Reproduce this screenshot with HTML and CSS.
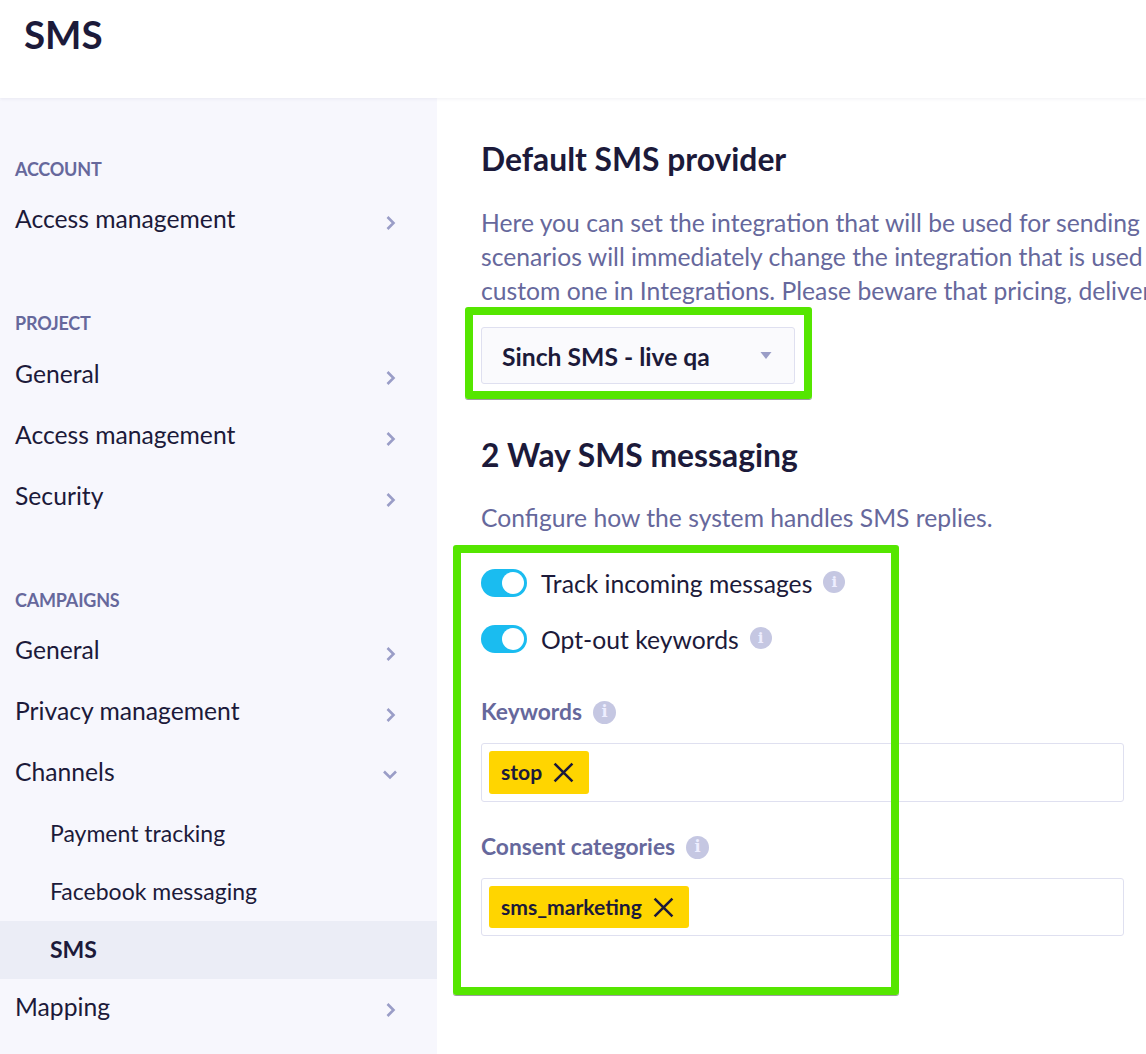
FILE: index.html
```html
<!DOCTYPE html>
<html lang="en">
<head>
<meta charset="utf-8">
<title>SMS</title>
<link rel="stylesheet" href="styles.css">
</head>
<body>
<header class="topbar"><h1 class="page-title">SMS</h1></header>
<div class="layout">
  <nav class="sidebar">
    <section class="nav-group">
      <h2 class="nav-label">ACCOUNT</h2>
      <a class="nav-item">Access management<svg class="chev" viewBox="0 0 12 16"><path d="M2.5 2l6 6-6 6"/></svg></a>
    </section>
    <section class="nav-group">
      <h2 class="nav-label roomy">PROJECT</h2>
      <a class="nav-item">General<svg class="chev" viewBox="0 0 12 16"><path d="M2.5 2l6 6-6 6"/></svg></a>
      <a class="nav-item">Access management<svg class="chev" viewBox="0 0 12 16"><path d="M2.5 2l6 6-6 6"/></svg></a>
      <a class="nav-item">Security<svg class="chev" viewBox="0 0 12 16"><path d="M2.5 2l6 6-6 6"/></svg></a>
    </section>
    <section class="nav-group">
      <h2 class="nav-label">CAMPAIGNS</h2>
      <a class="nav-item">General<svg class="chev" viewBox="0 0 12 16"><path d="M2.5 2l6 6-6 6"/></svg></a>
      <a class="nav-item">Privacy management<svg class="chev" viewBox="0 0 12 16"><path d="M2.5 2l6 6-6 6"/></svg></a>
      <a class="nav-item">Channels<svg class="chev-down" viewBox="0 0 16 12"><path d="M2 2.5l6 6 6-6"/></svg></a>
      <div class="nav-subs">
        <a class="nav-sub">Payment tracking</a>
        <a class="nav-sub">Facebook messaging</a>
        <a class="nav-sub active">SMS</a>
      </div>
      <a class="nav-item last">Mapping<svg class="chev" viewBox="0 0 12 16"><path d="M2.5 2l6 6-6 6"/></svg></a>
    </section>
  </nav>
  <main class="content">
    <h2 class="heading">Default SMS provider</h2>
    <p class="desc">Here you can set the integration that will be used for sending SMS messages in your campaigns.<br>scenarios will immediately change the integration that is used for sending, unless you set a<br>custom one in Integrations. Please beware that pricing, deliverability and features may differ.</p>
    <div class="select"><span>Sinch SMS - live qa</span><svg class="caret" viewBox="0 0 14 9"><path d="M1.500 1h11L7 8z" stroke-linejoin="round"/></svg></div>
    <h2 class="heading second">2 Way SMS messaging</h2>
    <p class="desc single">Configure how the system handles SMS replies.</p>
    <div class="toggle-row"><span class="toggle"><span class="knob"></span></span><span class="toggle-text">Track incoming messages</span><span class="info small">i</span></div>
    <div class="toggle-row"><span class="toggle"><span class="knob"></span></span><span class="toggle-text">Opt-out keywords</span><span class="info small">i</span></div>
    <div class="field-label first"><span class="field-text">Keywords</span><span class="info">i</span></div>
    <div class="tags tall"><span class="tag">stop<svg class="x" viewBox="0 0 20 20"><path d="M1.500 1.500l17 17M18.500 1.500l-17 17"/></svg></span></div>
    <div class="field-label"><span class="field-text">Consent categories</span><span class="info">i</span></div>
    <div class="tags"><span class="tag">sms_marketing<svg class="x" viewBox="0 0 20 20"><path d="M1.500 1.500l17 17M18.500 1.500l-17 17"/></svg></span></div>
    <div class="mark mark-a"></div>
    <div class="mark mark-b"></div>
  </main>
</div>
</body>
</html>
```
FILE: styles.css
```css
* { box-sizing: border-box; }
html, body { margin: 0; height: 100%; overflow: hidden; }
body { width: 1146px; height: 1054px; background: #fff; font-family: Lato, "Liberation Sans", sans-serif; color: #1c1a3a; }

.topbar { height: 98px; padding: 11px 24px 0; background: #fff; box-shadow: 0 1px 3px rgba(60, 60, 110, .08); position: relative; z-index: 2; }
.page-title { margin: 0; font-size: 38.5px; line-height: 47px; font-weight: 700; color: #1c1a3a; }

.layout { display: flex; height: 956px; }

.sidebar { width: 437px; flex: none; background: #f7f7fd; padding-top: 59px; overflow: hidden; }
.nav-group { margin-bottom: 62px; }
.nav-label { margin: 0 0 7px; padding-left: 15px; font-size: 18px; line-height: 24px; font-weight: 700; color: #66689c; letter-spacing: -.2px; }
.nav-label.roomy { margin-bottom: 8px; }
.nav-item { display: flex; justify-content: space-between; align-items: center; height: 61px; padding: 0 40px 0 15px; font-size: 24.7px; color: #1c1a3a; }
.nav-subs { margin-top: 3px; }
.nav-sub { display: flex; align-items: center; height: 58px; padding: 0 0 2px 50px; font-size: 23px; color: #1c1a3a; }
.nav-sub.active { background: #ebedf6; font-weight: 700; }
.nav-item.last { height: 54px; }
.chev { width: 12px; height: 16px; margin-top: 8px; fill: none; stroke: #9a9dc7; stroke-width: 2.6; }
.chev-down { width: 16px; height: 12px; margin: 7px -1px 0 0; fill: none; stroke: #9a9dc7; stroke-width: 2.6; }

.content { position: relative; flex: 1; min-width: 0; padding: 39px 0 0 44px; overflow: hidden; }
.heading { margin: 0; font-size: 31.8px; line-height: 44px; font-weight: 700; color: #1c1a3a; white-space: nowrap; }
.heading.second { margin-top: 49px; }
.desc { margin: 25px 0 0; font-size: 24.7px; line-height: 34px; color: #66689c; white-space: nowrap; }
.desc.single { margin-top: 24px; }

.select { display: flex; justify-content: space-between; align-items: center; width: 314px; height: 57px; margin-top: 19px; padding: 2px 21px 0 20px; background: #fafafd; border: 1px solid #dfe0f0; border-radius: 3px; font-size: 24.7px; font-weight: 700; color: #1c1a3a; }
.caret { width: 14px; height: 9px; margin-top: -3px; fill: #9a9dc7; }

.toggle-row { display: flex; align-items: center; height: 28px; margin-top: 28px; font-size: 24.7px; color: #1c1a3a; }
.desc.single + .toggle-row { margin-top: 34px; }
.toggle { display: flex; align-items: center; justify-content: flex-end; width: 46px; height: 28px; padding-right: 3px; background: #1abcf0; border-radius: 14px; flex: none; }
.knob { width: 22px; height: 22px; background: #fff; border-radius: 50%; }
.toggle-text { margin-left: 14px; }
.info { display: inline-flex; align-items: center; justify-content: center; width: 23px; height: 23px; margin-left: 11px; border-radius: 50%; background: #c5c7e2; color: #eef; font-family: "DejaVu Serif", serif; font-size: 16px; font-weight: 700; line-height: 1; }
.info.small { width: 22px; height: 22px; font-size: 15px; margin-top: -2px; }

.field-label { display: flex; align-items: center; height: 30px; margin-top: 30px; font-size: 22.8px; font-weight: 700; color: #66689c; }
.field-label.first { margin-top: 44px; }
.field-text { margin-top: -2px; }
.tags { display: flex; align-items: flex-start; width: 643px; height: 58px; margin-top: 16px; padding: 7px; border: 1px solid #dfe0f0; border-radius: 3px; background: #fff; }
.tags.tall { height: 59px; }
.tag { display: inline-flex; align-items: center; height: 42px; padding: 0 15px 2px 12px; background: #ffd500; border-radius: 3px; font-size: 21.1px; font-weight: 700; color: #1c1a3a; }
.tall .tag { height: 43px; }
.x { width: 21px; height: 21px; margin: 2px 0 0 11px; fill: none; stroke: #1c1a3a; stroke-width: 2.4; }

.mark { position: absolute; border: 8px solid #55e600; border-radius: 3px; box-shadow: 0 1px 0 rgba(60, 60, 60, .5); pointer-events: none; }
.mark-a { left: 28px; top: 209px; width: 347px; height: 92px; }
.mark-b { left: 16px; top: 447px; width: 446px; height: 450px; }
```
